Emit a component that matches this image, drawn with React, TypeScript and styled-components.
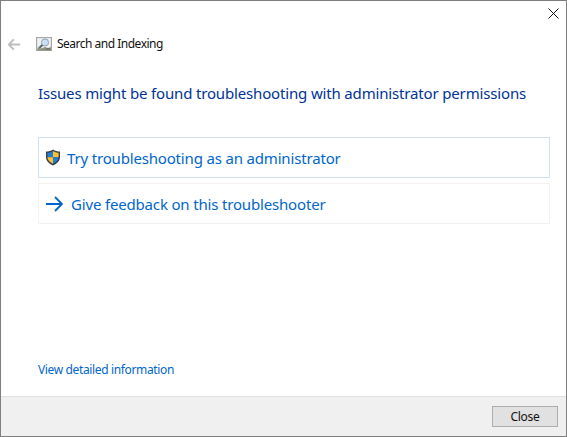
import React, { FC } from 'react';
import styled, { createGlobalStyle } from 'styled-components';

const GlobalStyle = createGlobalStyle`
  html, body {
    margin: 0;
    padding: 0;
    background: #fff;
  }
  * {
    box-sizing: border-box;
  }
`;

const SearchIcon = () => (
  <svg width="16" height="16" viewBox="0 0 16 16">
    <rect x="0.5" y="1.5" width="15" height="13" fill="#e6e6e6" stroke="#a6a6a6" />
    <rect x="2" y="3" width="12" height="10" fill="#f2f2f2" />
    <path d="M1 14.5 L2 11 L5 12.5 L9 11 L12 12 L15 11 V14.5 Z" fill="#8c9480" />
    <circle cx="9" cy="6.5" r="3.6" fill="#c9dff4" stroke="#8ea3b8" />
    <path d="M6.4 9 L3.4 11.8" stroke="#56636e" strokeWidth="2" />
    <path d="M10 13 h4" stroke="#5f5f5f" />
  </svg>
);

const ShieldIcon = () => (
  <svg width="16" height="17" viewBox="0 0 16 17">
    <path d="M8 0.6 C6 2 3.5 2.6 1 2.6 V8 C1 12 4 14.6 8 16.4 C12 14.6 15 12 15 8 V2.6 C12.5 2.6 10 2 8 0.6 Z" fill="#3b3f45" />
    <path d="M8 2 C6.4 3.1 4.4 3.7 2.4 3.8 V8.2 H8 Z" fill="#1f7fd8" />
    <path d="M8 2 C9.6 3.1 11.6 3.7 13.6 3.8 V8.2 H8 Z" fill="#fbc02d" />
    <path d="M2.4 8.2 H8 V14.8 C4.8 13.2 2.6 11.2 2.4 8.2 Z" fill="#fbc02d" />
    <path d="M13.6 8.2 H8 V14.8 C11.2 13.2 13.4 11.2 13.6 8.2 Z" fill="#1f7fd8" />
  </svg>
);

const ArrowIcon: FC<{ size: number; color: string; weight: number }> = ({ size, color, weight }) => (
  <svg width={size} height={size} viewBox="0 0 18 18" fill="none">
    <path d="M1 9 H17 M10 2 L17 9 L10 16" stroke={color} strokeWidth={weight} />
  </svg>
);

const App = () => {
  return (
    <Root>
      <GlobalStyle />
      <CloseRow>
        <CloseIcon width="11" height="11" viewBox="0 0 11 11">
          <path d="M0.5 0.5 L10.5 10.5 M10.5 0.5 L0.5 10.5" stroke="#111" fill="none" />
        </CloseIcon>
      </CloseRow>
      <Header>
        <BackIcon>
          <ArrowIcon size={13} color="#bdbdbd" weight={2.6} />
        </BackIcon>
        <SearchIcon />
        <Title>Search and Indexing</Title>
      </Header>
      <Content>
        <Heading>Issues might be found troubleshooting with administrator permissions</Heading>
        <Options>
          <Option $active>
            <ShieldIcon />
            <OptionText>Try troubleshooting as an administrator</OptionText>
          </Option>
          <Option>
            <ArrowSlot>
              <ArrowIcon size={18} color="#0066cc" weight={1.8} />
            </ArrowSlot>
            <OptionText>Give feedback on this troubleshooter</OptionText>
          </Option>
        </Options>
        <Details>View detailed information</Details>
      </Content>
      <Footer>
        <CloseButton>Close</CloseButton>
      </Footer>
    </Root>
  );
};

export default App;

const Root = styled.div`
  width: 567px;
  height: 437px;
  display: flex;
  flex-direction: column;
  border: 1px solid #7f7f7f;
  background: #fff;
  font-family: 'Noto Sans', 'Open Sans', sans-serif;
`;
const CloseRow = styled.div`
  height: 25px;
  display: flex;
  justify-content: flex-end;
  align-items: flex-start;
  padding: 7px 7px 0 0;
`;
const CloseIcon = styled.svg`
  display: block;
`;
const Header = styled.div`
  height: 36px;
  display: flex;
  align-items: center;
  padding-left: 35px;
  position: relative;
`;
const BackIcon = styled.div`
  position: absolute;
  left: 7px;
  top: 8px;
  height: 13px;
  transform: scaleX(-1);
`;
const Title = styled.div`
  margin-left: 5px;
  margin-bottom: 2px;
  font-size: 12px;
  color: #111;
  letter-spacing: -0.5px;
`;
const Content = styled.div`
  flex: 1;
  display: flex;
  flex-direction: column;
  padding: 19px 16px 0 37px;
`;
const Heading = styled.div`
  font-size: 15px;
  line-height: 24px;
  color: #003399;
  white-space: nowrap;
  letter-spacing: -0.16px;
`;
const Options = styled.div`
  margin-top: 32px;
  display: flex;
  flex-direction: column;
  gap: 5px;
`;
const Option = styled.div<{ $active?: boolean }>`
  height: 41px;
  display: flex;
  align-items: center;
  gap: 6px;
  padding-left: 6px;
  border: 1px solid ${(p) => (p.$active ? '#d0e0ee' : '#f2f2f2')};
`;
const ArrowSlot = styled.div`
  display: flex;
  margin-right: 2px;
`;
const OptionText = styled.div`
  font-size: 15px;
  color: #0066cc;
  letter-spacing: -0.17px;
  white-space: nowrap;
`;
const Details = styled.div`
  margin-top: auto;
  margin-bottom: 18px;
  font-size: 12px;
  line-height: 16px;
  color: #0066cc;
  letter-spacing: -0.36px;
`;
const Footer = styled.div`
  height: 40px;
  display: flex;
  justify-content: flex-end;
  align-items: flex-start;
  padding: 9px 8px 0 0;
  background: #f0f0f0;
  border-top: 1px solid #dfdfdf;
`;
const CloseButton = styled.button`
  width: 66px;
  height: 21px;
  padding: 0;
  border: 1px solid #adadad;
  background: #e1e1e1;
  color: #111;
  font-family: 'Noto Sans', 'Open Sans', sans-serif;
  font-size: 12px;
  line-height: 17px;
  letter-spacing: -0.3px;
`;
